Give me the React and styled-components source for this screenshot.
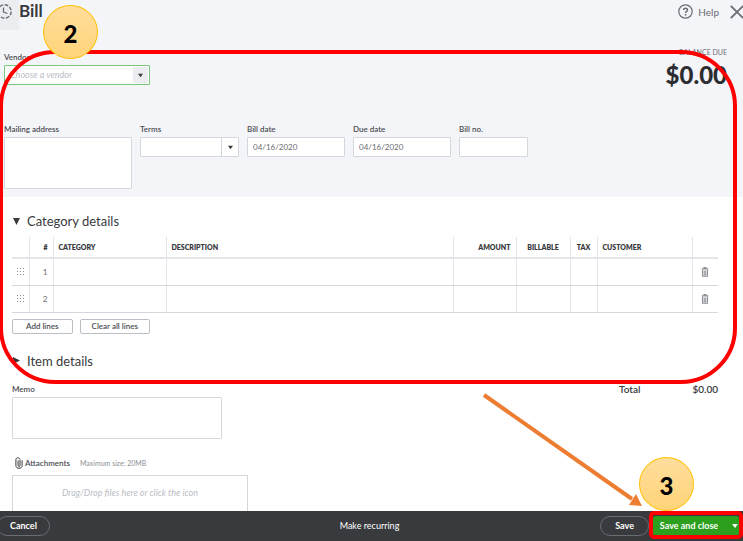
import React from 'react';
import styled, { createGlobalStyle } from 'styled-components';

const GlobalStyle = createGlobalStyle`
  *, *::before, *::after {
    box-sizing: border-box;
  }
  body {
    margin: 0;
    background: #fff;
    color: #393a3d;
    font-family: Lato, "Liberation Sans", sans-serif;
    font-size: 8px;
    line-height: 10px;
  }
  button, input, select, textarea {
    font: inherit;
    color: inherit;
    margin: 0;
  }
`;

const Page = styled.div`
  position: relative;
  display: flex;
  flex-direction: column;
  height: 100vh;
  overflow: hidden;
`;

const Content = styled.main`
  flex: 1;
  min-height: 0;
  overflow-y: auto;
  scrollbar-width: none;
`;

const Top = styled.div`
  background: #f4f5f9;
  padding-bottom: 8px;
`;

const Header = styled.header`
  display: flex;
  height: 30px;
`;

const HistoryButton = styled.button`
  display: flex;
  align-items: flex-start;
  width: 19px;
  height: 30px;
  padding: 3px 0 0;
  border: 0;
  background: #ecedf0;
  color: #6b6c72;
  overflow: hidden;
`;

const Title = styled.h1`
  margin: 0;
  font-size: 17px;
  line-height: 22px;
  font-weight: 700;
`;

const HeaderActions = styled.div`
  display: flex;
  align-items: center;
  height: 23px;
  margin-left: auto;
`;

const HeaderButton = styled.button`
  display: flex;
  align-items: center;
  gap: 5px;
  padding: 0;
  margin-left: 11px;
  border: 0;
  background: none;
  color: #6b6c72;
  font-size: 10px;
  line-height: 12px;
`;

const VendorRow = styled.div`
  display: flex;
  justify-content: space-between;
  height: 92px;
  padding: 17px 16px 0 4px;
`;

const Balance = styled.div`
  text-align: right;
  color: #6b6c72;
  font-size: 7px;
`;

const BalanceAmount = styled.div`
  margin-top: 6px;
  color: #2c2d30;
  font-size: 24px;
  line-height: 24px;
  font-weight: 900;
`;

const FieldRow = styled.div`
  display: flex;
  align-items: flex-start;
  gap: 8px;
  padding: 2px 4px 0;
`;

const Field = styled.div`
  display: flex;
  flex-direction: column;
  gap: 3px;
  width: ${(props) => props.$width}px;
  margin-top: ${(props) => props.$top || 0}px;
`;

const Label = styled.label`
  color: #4c4d52;
  font-weight: 600;
  white-space: nowrap;
`;

const TextInput = styled.input`
  width: 100%;
  height: 20px;
  padding: 0 5px;
  border: 1px solid #d4d7dc;
  border-radius: 1px;
  background: #fff;
  color: #6b6c72;
`;

const TextArea = styled.textarea`
  display: block;
  width: 100%;
  height: ${(props) => props.$height}px;
  padding: 5px;
  border: 1px solid #d4d7dc;
  border-radius: 1px;
  background: #fff;
  resize: none;
`;

const SelectBox = styled.div`
  display: grid;
  grid-template-columns: 1fr 17px;
  height: 20px;
  border: 1px solid ${(props) => (props.$active ? '#7ac77b' : '#d4d7dc')};
  border-radius: 1px;
  background: #fff;
`;

const Select = styled.select`
  grid-area: 1 / 1 / 2 / 3;
  appearance: none;
  width: 100%;
  padding: 0 20px 0 5px;
  border: 0;
  outline: 0;
  background: none;
  color: #babec5;
  font-size: 9px;
  font-style: italic;
`;

const SelectArrow = styled.span`
  grid-area: 1 / 2;
  display: flex;
  align-items: center;
  justify-content: center;
  color: #393a3d;
  pointer-events: none;
  ${(props) => (props.$filled ? 'background: #ecedf0; border: 1px solid #fff;' : 'border-left: 1px solid #d4d7dc;')}
`;

const Details = styled.section`
  padding: 14px 25px 0 12px;
`;

const SectionToggle = styled.button`
  display: flex;
  align-items: center;
  gap: 7px;
  height: 20px;
  padding: 0 1px;
  border: 0;
  background: none;
  font-size: 13px;
  line-height: 20px;
`;

const LinesTable = styled.table`
  width: 100%;
  margin: 6px 0;
  border-collapse: collapse;
  table-layout: fixed;
`;

const Th = styled.th`
  width: ${(props) => (props.$width ? props.$width + 'px' : 'auto')};
  height: 21px;
  padding: 0 5px;
  border-bottom: 2px solid #e3e5e8;
  border-left: 1px solid #e3e5e8;
  font-size: 7px;
  font-weight: 800;
  text-align: ${(props) => props.$align || 'left'};
  &:first-child {
    border-left: 0;
  }
`;

const Td = styled.td`
  height: 27px;
  padding: 0 5px;
  border-bottom: 1px solid #d4d7dc;
  border-left: 1px solid #e3e5e8;
  color: #6b6c72;
  text-align: ${(props) => props.$align || 'left'};
  &:first-child {
    border-left: 0;
  }
`;

const IconButton = styled.button`
  display: block;
  margin: 0 auto;
  padding: 0;
  border: 0;
  background: none;
  color: #8d9096;
  svg {
    display: block;
  }
`;

const ButtonRow = styled.div`
  display: flex;
  gap: 7px;
  padding-bottom: 3px;
`;

const SmallButton = styled.button`
  height: 15px;
  padding: 0 ${(props) => props.$pad}px;
  border: 1px solid #babec5;
  border-radius: 2px;
  background: #fff;
  color: #4c4d52;
  line-height: 12px;
  font-weight: 600;
`;

const Summary = styled.div`
  display: flex;
  justify-content: space-between;
  align-items: flex-start;
  margin-top: 13px;
`;

const Total = styled.div`
  display: flex;
  justify-content: space-between;
  width: 99px;
  font-size: 10px;
  font-weight: 600;
`;

const AttachmentsHead = styled.div`
  display: flex;
  align-items: center;
  gap: 2px;
  height: 14px;
  margin: 17px 0 5px;
  padding-left: 3px;
`;

const SizeNote = styled.span`
  margin-left: 8px;
  color: #8d9096;
  font-size: 7px;
`;

const DropZone = styled.button`
  display: block;
  width: 236px;
  height: 60px;
  padding: 0 0 24px;
  border: 1px solid #d4d7dc;
  background: #fff;
  color: #babec5;
  font-size: 9px;
  font-style: italic;
`;

const Footer = styled.footer`
  display: grid;
  grid-template-columns: 1fr auto 1fr;
  align-items: center;
  height: 30px;
  padding-right: 4px;
  background: #393a3d;
  color: #fff;
  font-weight: 700;
`;

const PillButton = styled.button`
  height: 20px;
  padding: 0 ${(props) => props.$pad}px;
  border: 1px solid #6b6c72;
  border-radius: 10px;
  background: none;
  font-size: 9px;
  font-weight: 700;
`;

const PlainButton = styled.button`
  padding: 0;
  border: 0;
  background: none;
  font-size: 9px;
  font-weight: 400;
`;

const FooterLeft = styled.div`
  margin-left: -3px;
`;

const FooterRight = styled.div`
  display: flex;
  justify-content: flex-end;
  gap: 4px;
`;

const SplitButton = styled.div`
  display: flex;
  height: 20px;
  border-radius: 3px;
  background: #2ca01c;
`;

const SplitPart = styled.button`
  display: flex;
  align-items: center;
  justify-content: ${(props) => props.$align || 'center'};
  width: ${(props) => props.$width}px;
  padding: 0 1px;
  border: 0;
  background: none;
  font-size: 9px;
  font-weight: 700;
  white-space: nowrap;
`;

const Outline = styled.div`
  position: absolute;
  pointer-events: none;
  border: 4px solid #f00;
`;

const FormOutline = styled(Outline)`
  top: 50px;
  left: -1px;
  right: 6px;
  height: 334px;
  border-radius: 56px;
`;

const SaveOutline = styled(Outline)`
  right: 0;
  bottom: 2px;
  width: 94px;
  height: 28px;
  border-radius: 5px;
`;

const Step = styled.div`
  position: absolute;
  display: flex;
  align-items: center;
  justify-content: center;
  width: 55px;
  height: 54px;
  padding-top: 4px;
  border: 1px solid #ffc000;
  border-radius: 50%;
  background: linear-gradient(#ffdd9c, #ffd479);
  color: #000;
  font-size: 24px;
  line-height: 32px;
  font-weight: 900;
  pointer-events: none;
`;

const FirstStep = styled(Step)`
  top: 5px;
  left: 43px;
`;

const SecondStep = styled(Step)`
  right: 49px;
  bottom: 30px;
`;

const Arrow = styled.svg`
  position: absolute;
  right: 101px;
  bottom: 34px;
  pointer-events: none;
`;

function Caret({ size = 5 }) {
  return (
    <svg width={size} height={size} viewBox="0 0 6 6" aria-hidden="true">
      <path d="M0 1h6L3 5z" fill="currentColor" />
    </svg>
  );
}

function HistoryIcon() {
  return (
    <svg width="19" height="18" viewBox="0 0 19 18" fill="none" stroke="currentColor" aria-hidden="true">
      <circle cx="4.500" cy="8.500" r="6.700" strokeWidth="1.400" strokeDasharray="3.700 1.560" />
      <path d="M3.500 4.500v4.500l4 1.500" strokeWidth="1.300" />
    </svg>
  );
}

function HelpIcon() {
  return (
    <svg width="15" height="15" viewBox="0 0 15 15" fill="none" stroke="currentColor" aria-hidden="true">
      <circle cx="7.500" cy="7.500" r="6.700" strokeWidth="1.200" />
      <path d="M5.600 6.100c0-2.600 3.900-2.500 3.900-.2 0 1.500-1.900 1.400-1.900 3" strokeWidth="1.500" />
      <path d="M7.600 10v1.500" strokeWidth="1.600" />
    </svg>
  );
}

function CloseIcon() {
  return (
    <svg width="13" height="14" viewBox="0 0 13 14" fill="none" stroke="currentColor" aria-hidden="true">
      <path d="M.8 .8l12.400 12.400M13.200 .8L.8 13.200" strokeWidth="1.900" />
    </svg>
  );
}

function GripIcon() {
  return (
    <svg width="7" height="7" viewBox="0 0 7 7" fill="currentColor" aria-hidden="true">
      {[0, 3, 6].map((y) =>
        [0, 3, 6].map((x) => <rect key={x + '-' + y} x={x} y={y} width="1" height="1" />)
      )}
    </svg>
  );
}

function TrashIcon() {
  return (
    <svg width="8" height="10" viewBox="0 0 8 10" fill="none" stroke="currentColor" aria-hidden="true">
      <path d="M2.500 .6h3M.8 1.900h6.400" strokeWidth="1.200" />
      <path d="M1.500 2.500v6.800h5V2.500M3.200 3.500v5M4.800 3.500v5" strokeWidth="1.100" />
    </svg>
  );
}

function ClipIcon() {
  return (
    <svg width="8" height="12" viewBox="0 0 8 12" fill="none" stroke="currentColor" aria-hidden="true">
      <path
        d="M5 3v5.500c0 1.300-1.900 1.300-1.900 0V3.500M.9 8.600V2.600C.9.200 5 .2 5 2.600M.9 8.600c0 3.600 6.200 3.600 6.200 0V3.300"
        strokeWidth="1"
      />
    </svg>
  );
}

function LineRow({ number }) {
  return (
    <tr>
      <Td>
        <IconButton aria-label={'Move line ' + number}>
          <GripIcon />
        </IconButton>
      </Td>
      <Td $align="right">{number}</Td>
      <Td />
      <Td />
      <Td />
      <Td />
      <Td />
      <Td />
      <Td>
        <IconButton aria-label={'Delete line ' + number}>
          <TrashIcon />
        </IconButton>
      </Td>
    </tr>
  );
}

export default function App() {
  return (
    <Page>
      <GlobalStyle />
      <Content>
        <Top>
          <Header>
            <HistoryButton aria-label="Recent bills">
              <HistoryIcon />
            </HistoryButton>
            <Title>Bill</Title>
            <HeaderActions>
              <HeaderButton>
                <HelpIcon />
                Help
              </HeaderButton>
              <HeaderButton aria-label="Close">
                <CloseIcon />
              </HeaderButton>
            </HeaderActions>
          </Header>

          <VendorRow>
            <Field $width={146} $top={5}>
              <Label htmlFor="vendor">Vendor</Label>
              <SelectBox $active>
                <Select id="vendor">
                  <option>Choose a vendor</option>
                </Select>
                <SelectArrow $filled>
                  <Caret />
                </SelectArrow>
              </SelectBox>
            </Field>
            <Balance>
              BALANCE DUE
              <BalanceAmount>$0.00</BalanceAmount>
            </Balance>
          </VendorRow>

          <FieldRow>
            <Field $width={128}>
              <Label htmlFor="address">Mailing address</Label>
              <TextArea id="address" $height={52} />
            </Field>
            <Field $width={99}>
              <Label htmlFor="terms">Terms</Label>
              <SelectBox>
                <Select id="terms" />
                <SelectArrow>
                  <Caret />
                </SelectArrow>
              </SelectBox>
            </Field>
            <Field $width={98}>
              <Label htmlFor="bill-date">Bill date</Label>
              <TextInput id="bill-date" defaultValue="04/16/2020" />
            </Field>
            <Field $width={98}>
              <Label htmlFor="due-date">Due date</Label>
              <TextInput id="due-date" defaultValue="04/16/2020" />
            </Field>
            <Field $width={69}>
              <Label htmlFor="bill-no">Bill no.</Label>
              <TextInput id="bill-no" />
            </Field>
          </FieldRow>
        </Top>

        <Details>
          <SectionToggle aria-expanded="true">
            <svg width="7" height="7" viewBox="0 0 7 7" aria-hidden="true">
              <path d="M0 0h7L3.500 7z" fill="currentColor" />
            </svg>
            Category details
          </SectionToggle>
          <LinesTable>
            <thead>
              <tr>
                <Th $width={17} />
                <Th $width={24} $align="right">#</Th>
                <Th $width={113}>CATEGORY</Th>
                <Th>DESCRIPTION</Th>
                <Th $width={63} $align="right">AMOUNT</Th>
                <Th $width={54} $align="center">BILLABLE</Th>
                <Th $width={27} $align="center">TAX</Th>
                <Th $width={95}>CUSTOMER</Th>
                <Th $width={26} />
              </tr>
            </thead>
            <tbody>
              <LineRow number={1} />
              <LineRow number={2} />
            </tbody>
          </LinesTable>
          <ButtonRow>
            <SmallButton $pad={13}>Add lines</SmallButton>
            <SmallButton $pad={11}>Clear all lines</SmallButton>
          </ButtonRow>
        </Details>

        <Details>
          <SectionToggle aria-expanded="false">
            <svg width="7" height="7" viewBox="0 0 7 7" aria-hidden="true">
              <path d="M0 0v7l7-3.500z" fill="currentColor" />
            </svg>
            Item details
          </SectionToggle>
          <Summary>
            <Field $width={210}>
              <Label htmlFor="memo">Memo</Label>
              <TextArea id="memo" $height={42} />
            </Field>
            <Total>
              <span>Total</span>
              <span>$0.00</span>
            </Total>
          </Summary>
          <AttachmentsHead>
            <ClipIcon />
            <Label as="span">Attachments</Label>
            <SizeNote>Maximum size: 20MB</SizeNote>
          </AttachmentsHead>
          <DropZone>Drag/Drop files here or click the icon</DropZone>
        </Details>
      </Content>

      <Footer>
        <FooterLeft>
          <PillButton $pad={12}>Cancel</PillButton>
        </FooterLeft>
        <PlainButton>Make recurring</PlainButton>
        <FooterRight>
          <PillButton $pad={14}>Save</PillButton>
          <SplitButton>
            <SplitPart $width={72}>Save and close</SplitPart>
            <SplitPart $width={14} $align="flex-end" aria-label="More save options">
              <Caret size={6} />
            </SplitPart>
          </SplitButton>
        </FooterRight>
      </Footer>

      <FormOutline />
      <Arrow width="161" height="116" viewBox="0 0 161 116" aria-hidden="true">
        <path d="M3 4l148 104" stroke="#ed7d31" strokeWidth="4" />
        <path d="M161 115l-13-1 7-11z" fill="#ed7d31" />
      </Arrow>
      <SaveOutline />
      <FirstStep>2</FirstStep>
      <SecondStep>3</SecondStep>
    </Page>
  );
}
